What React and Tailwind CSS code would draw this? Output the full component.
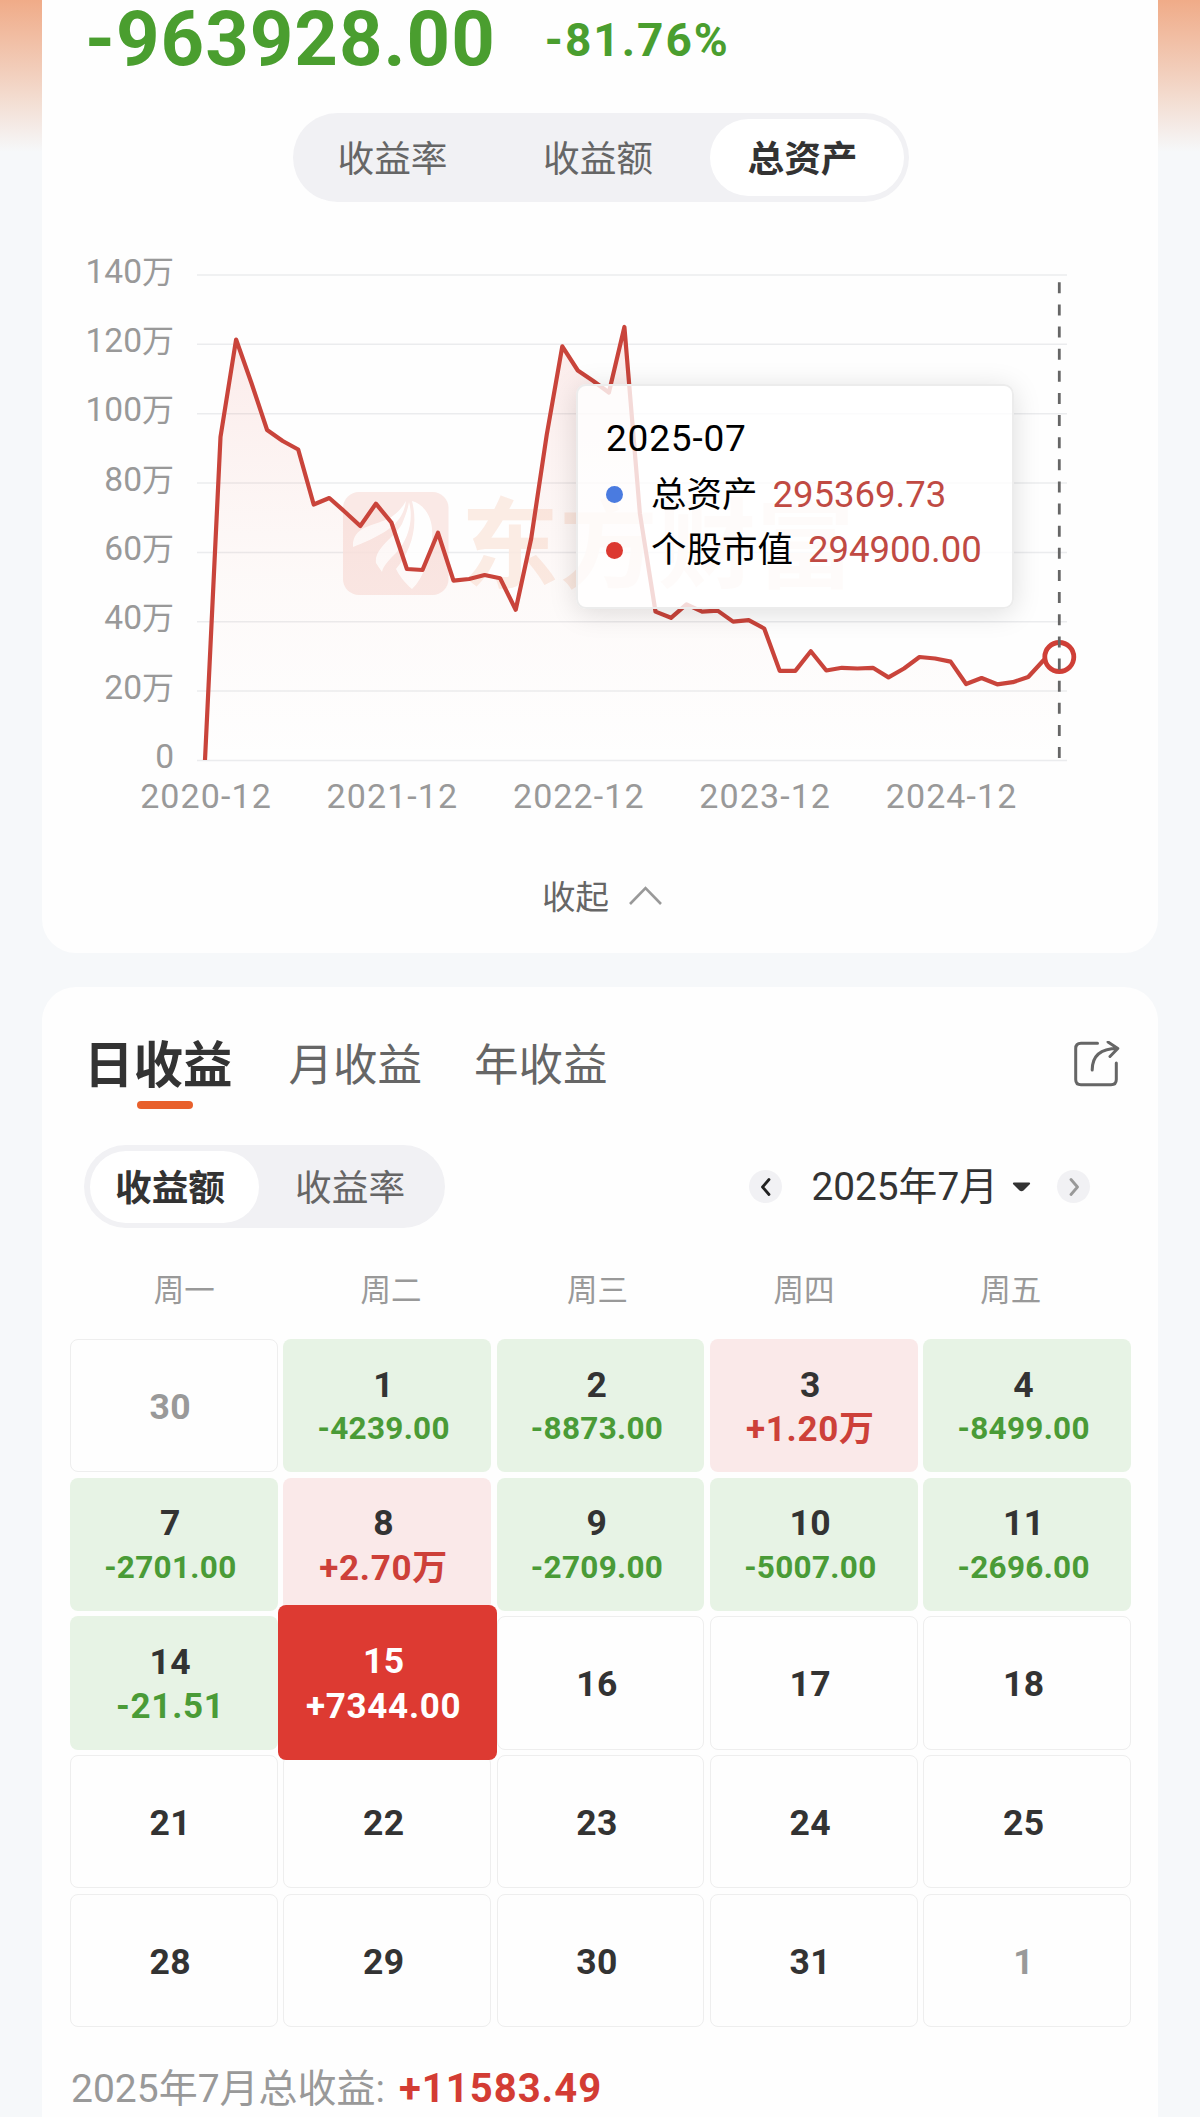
const LINE_Y = [
  760, 437, 339.5, 383.5, 430, 441, 449.5, 504.5, 498, 511.7, 526, 503.7, 522.5, 569, 570, 532.8,
  580.6, 579, 575, 578.3, 609.7, 538.5, 435, 346.4, 370.5, 381, 392.5, 327, 513.5, 611.6, 617.8,
  604.4, 611.6, 610.6, 621.6, 620.2, 628.5, 670.9, 670.9, 651.2, 670.5, 667.8, 668.5, 667.8, 677.4,
  668.5, 657, 658.5, 661.6, 684, 678, 684.3, 682.2, 677, 660, 657,
];
const points = LINE_Y.map((y, i) => `${(205 + i * 15.533).toFixed(1)},${y}`).join(" ");
const Y_LABELS = ["140万", "120万", "100万", "80万", "60万", "40万", "20万", "0"];
const X_LABELS = ["2020-12", "2021-12", "2022-12", "2023-12", "2024-12"];

const DAYS = [
  { d: "30", muted: true },
  { d: "1", v: "-4239.00" },
  { d: "2", v: "-8873.00" },
  { d: "3", v: "+1.20万" },
  { d: "4", v: "-8499.00" },
  { d: "7", v: "-2701.00" },
  { d: "8", v: "+2.70万" },
  { d: "9", v: "-2709.00" },
  { d: "10", v: "-5007.00" },
  { d: "11", v: "-2696.00" },
  { d: "14", v: "-21.51" },
  { d: "15", v: "+7344.00", selected: true },
  { d: "16" },
  { d: "17" },
  { d: "18" },
  { d: "21" },
  { d: "22" },
  { d: "23" },
  { d: "24" },
  { d: "25" },
  { d: "28" },
  { d: "29" },
  { d: "30" },
  { d: "31" },
  { d: "1", muted: true },
];

function Chart() {
  return (
    <svg className="block" width="1116" height="600" viewBox="42 230 1116 600">
      <defs>
        <linearGradient id="area" gradientUnits="userSpaceOnUse" x1="0" y1="327" x2="0" y2="760">
          <stop offset="0" stopColor="#e23c32" stopOpacity="0.1" />
          <stop offset="0.6" stopColor="#e66a50" stopOpacity="0.03" />
          <stop offset="1" stopColor="#e66a50" stopOpacity="0" />
        </linearGradient>
      </defs>
      {Y_LABELS.map((label, i) => (
        <g key={label}>
          <line x1="197" x2="1067" y1={275 + i * 69.35} y2={275 + i * 69.35} stroke="#ebecee" strokeWidth="1.5" />
          <text x="174" y={282.7 + i * 69.35} textAnchor="end" fontSize="33.5" fill="#999">
            {label.replace("万", "")}
            {label.endsWith("万") && <tspan fontSize="32">万</tspan>}
          </text>
        </g>
      ))}
      {X_LABELS.map((label, i) => (
        <text key={label} x={206 + i * 186.4} y="807.5" textAnchor="middle" fontSize="34" letterSpacing="1.1" fill="#999">
          {label}
        </text>
      ))}
      <g opacity="0.85">
        <rect x="343" y="492" width="105.5" height="103" rx="16" fill="#fae6e2" />
        <path
          d="M353 547 C352 527 372 526 388 519 C397 514 402 508 406 501 C404 516 396 524 386 531 C378 536 364 543 353 547 Z M412 501 C424 504 434 518 432 538 C430 556 424 578 412 589 C404 582 399 575 396 569 C410 552 419 528 412 501 Z M376 563 C374 548 394 538 402 524 C405 517 408 509 409 502 C414 520 408 540 396 553 C389 560 383 566 382 572 Z"
          fill="#fff"
        />
        <text x="461" y="580" fontSize="98" fontWeight="700" letterSpacing="0.5" fill="#fbe9e0">
          东方财富
        </text>
      </g>
      <polygon points={`205,760 ${points} 1059.3,760`} fill="url(#area)" />
      <polyline points={points} fill="none" stroke="#c9443b" strokeWidth="4.2" strokeLinejoin="round" />
      <circle cx="1059.3" cy="657" r="14.5" fill="#fff" stroke="#cf3f37" strokeWidth="4.8" />
      <line x1="1059.3" x2="1059.3" y1="282.3" y2="760" stroke="#666" strokeWidth="2.8" strokeDasharray="11 11.13" />
    </svg>
  );
}

function Tooltip() {
  return (
    <div className="absolute left-[534px] top-[384px] h-[225px] w-[438px] rounded-[10px] border-2 border-[#ececec] bg-white/80 pl-[28px] pt-[26px] text-[36.5px] text-black shadow-[0_4px_28px_rgba(0,0,0,0.13)]">
      <div className="h-[54px] text-[37px] leading-[54px] tracking-[0.8px]">2025-07</div>
      <div className="flex h-[56px] items-center">
        <i className="mr-[28px] size-[17px] rounded-full bg-[#4a7be0]" />
        <span className="pt-[3px] text-[35.5px]">总资产</span>
        <span className="ml-[15px] pt-[2px] text-[#c04a43]">295369.73</span>
      </div>
      <div className="flex h-[56px] items-center">
        <i className="mr-[28px] size-[17px] rounded-full bg-[#dc3931]" />
        <span className="pt-[2px] text-[35.5px]">个股市值</span>
        <span className="ml-[15px] text-[#c04a43]">294900.00</span>
      </div>
    </div>
  );
}

function DayCell({ d, v, muted, selected }) {
  const up = v && v[0] === "+";
  const small = v && v.length === 8 && !selected;
  const box = selected
    ? "z-10 -mx-[5.8px] -mt-[11px] -mb-[10px] bg-[#dd3a32] text-white"
    : !v
      ? "border border-[#eeeeee]"
      : up
        ? "bg-[#fae9e9]"
        : "bg-[#e7f3e5]";
  return (
    <div className={`flex flex-col items-center justify-center rounded-lg pr-[7px] pt-[3px] font-bold ${box}`}>
      <div className={`text-[35.5px] leading-[44px] tracking-[0.4px] ${selected ? "" : muted ? "text-[#999]" : "text-[#333]"}`}>{d}</div>
      {v && (
        <div
          className={`flex h-[45px] items-center whitespace-nowrap ${small ? "text-[31.5px] tracking-[0.3px]" : "text-[35px] tracking-[0.7px]"} ${small ? "" : "pt-[2px]"} ${selected ? "" : up ? "text-[#cd4039]" : "text-[#4a9b37]"}`}
        >
          {v}
        </div>
      )}
    </div>
  );
}

export default function App() {
  return (
    <div className="h-[2117px] w-[1200px] overflow-hidden bg-[#f6f8fa] bg-[linear-gradient(#f0ab88_0px,#f2d0be_75px,#f6f8fa_152px)] bg-no-repeat px-[42px] font-['Roboto','Noto_Sans_CJK_SC',sans-serif] text-[#666]">
      <section className="relative h-[953px] rounded-b-[34px] bg-[#fefefe]">
        <div className="flex h-[113px] items-start font-bold text-[#4a9e2f]">
          <div className="ml-[43px] text-[76px] leading-[78px] tracking-[1px]">-963928.00</div>
          <div className="ml-[49px] text-[46px] leading-[80px] tracking-[2px]">-81.76%</div>
        </div>
        <div className="ml-[251px] flex h-[89px] w-[616px] items-center rounded-full bg-[#f1f1f4] text-[36.7px]">
          <div className="w-[206px] pr-[7px] pt-[5px] text-center">收益率</div>
          <div className="w-[211px] pr-[13px] pt-[5px] text-center">收益额</div>
          <div className="flex h-[77px] w-[194px] items-center justify-center rounded-full bg-white pr-[9px] pt-[5px] font-bold text-[#333]">总资产</div>
        </div>
        <div className="pt-[28px]">
          <Chart />
        </div>
        <Tooltip />
        <div className="flex h-[134px] items-center justify-center pl-[4px] text-[33.5px]">
          <span className="pt-[2px]">收起</span>
          <svg className="ml-[19px] -mt-[2px]" width="34" height="22" viewBox="0 0 34 22" fill="none" stroke="#999" strokeWidth="2.6">
            <path d="M2 19 L17.5 3 L33 19" />
          </svg>
        </div>
      </section>

      <section className="mt-[34px] h-[1160px] rounded-t-[34px] bg-[#fefefe] pt-[45px]">
        <div className="flex h-[64px] items-center pl-[42px] pr-[38px]">
          <div className="relative pt-[4px] text-[49.5px] font-bold text-[#333]">
            日收益
            <i className="absolute left-[53px] top-[76px] h-2 w-[56px] rounded-full bg-[#e8602c]" />
          </div>
          <div className="ml-[56px] pt-[4px] text-[44.5px]">月收益</div>
          <div className="ml-[52px] pt-[4px] text-[44.5px]">年收益</div>
          <svg className="ml-auto" width="46" height="46" viewBox="1074 1041 46 46" fill="none" stroke="#666" strokeWidth="3" strokeLinecap="round" strokeLinejoin="round">
            <path d="M1097.5 1043.2 H1081 Q1075.7 1043.2 1075.7 1048.5 V1079.5 Q1075.7 1084.8 1081 1084.8 H1111 Q1116.3 1084.8 1116.3 1079.5 V1063" />
            <path d="M1092.2 1070 C1092.2 1055 1101 1048.5 1117.5 1048.5 M1108 1042 L1117.8 1048.5 L1110 1056.5" />
          </svg>
        </div>
        <div className="mt-[49px] flex h-[83px] items-center pl-[42px] pr-[68px]">
          <div className="flex h-[83px] w-[361px] items-center rounded-full bg-[#f1f1f4] pl-[6px] text-[36.7px]">
            <div className="flex h-[72px] w-[169px] items-center justify-center rounded-full bg-white pr-[9px] pt-[5px] font-bold text-[#333]">收益额</div>
            <div className="ml-[36px] pt-[5px]">收益率</div>
          </div>
          <span className="ml-auto flex size-[33px] items-center justify-center rounded-full bg-[#f1f1f4]">
            <svg width="12" height="18" viewBox="0 0 12 18" fill="none" stroke="#222" strokeWidth="2.8" strokeLinecap="round" strokeLinejoin="round">
              <path d="M9 1.5 L2.5 9 L9 16.5" />
            </svg>
          </span>
          <span className="ml-[29px] pt-[2px] text-[38.8px] text-[#333]">2025年7月</span>
          <svg className="ml-[14px]" width="19" height="10" viewBox="0 0 19 10" fill="#333">
            <path d="M2 0.5 H17 Q19 1 17.5 2.5 L11.5 8.5 Q9.5 10 7.5 8.5 L1.5 2.5 Q0 1 2 0.5 Z" />
          </svg>
          <span className="ml-[26px] flex size-[33px] items-center justify-center rounded-full bg-[#f1f1f4]">
            <svg width="12" height="18" viewBox="0 0 12 18" fill="none" stroke="#999" strokeWidth="2.8" strokeLinecap="round" strokeLinejoin="round">
              <path d="M3 1.5 L9.5 9 L3 16.5" />
            </svg>
          </span>
        </div>
        <div className="ml-[39px] grid h-[111px] w-[1033px] grid-cols-5 items-center pt-[14px] text-center text-[30.5px] text-[#999]">
          {["周一", "周二", "周三", "周四", "周五"].map((w) => (
            <div key={w}>{w}</div>
          ))}
        </div>
        <div className="ml-[28px] grid h-[688px] w-[1061px] grid-cols-5 grid-rows-5 gap-[5.7px]">
          {DAYS.map((day, i) => (
            <DayCell key={i} {...day} />
          ))}
        </div>
        <div className="flex h-[120px] items-center pl-[29px] pt-[4px] text-[39px] text-[#999]">
          2025年7月总收益:
          <span className="ml-[14px] text-[40px] font-bold tracking-[1px] text-[#d33c34]">+11583.49</span>
        </div>
      </section>
    </div>
  );
}
